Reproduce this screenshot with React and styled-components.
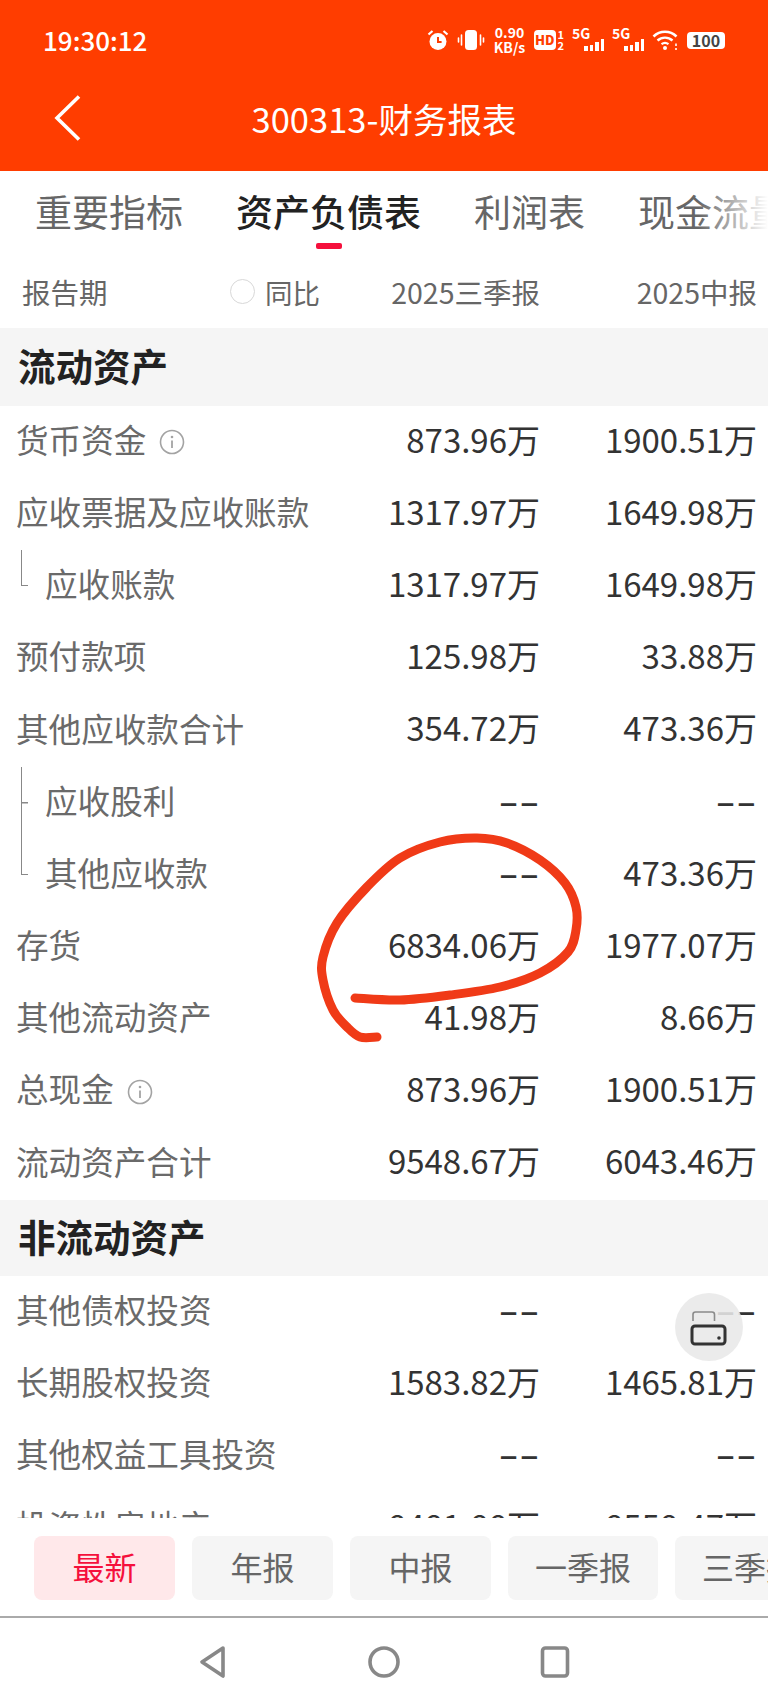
import React from "react";
import styled, { createGlobalStyle } from "styled-components";

const FONT = '"Noto Sans CJK SC", "Noto Sans", sans-serif';

const GlobalStyle = createGlobalStyle`
  html, body {
    margin: 0;
    padding: 0;
    background: #fff;
  }
  * {
    box-sizing: border-box;
  }
`;

const currentRows = [
  { label: "货币资金", a: "873.96万", b: "1900.51万", info: true },
  { label: "应收票据及应收账款", a: "1317.97万", b: "1649.98万" },
  { label: "应收账款", a: "1317.97万", b: "1649.98万", tree: "last" },
  { label: "预付款项", a: "125.98万", b: "33.88万" },
  { label: "其他应收款合计", a: "354.72万", b: "473.36万" },
  { label: "应收股利", a: "--", b: "--", tree: "mid" },
  { label: "其他应收款", a: "--", b: "473.36万", tree: "last" },
  { label: "存货", a: "6834.06万", b: "1977.07万" },
  { label: "其他流动资产", a: "41.98万", b: "8.66万" },
  { label: "总现金", a: "873.96万", b: "1900.51万", info: true },
  { label: "流动资产合计", a: "9548.67万", b: "6043.46万" },
];

const nonCurrentRows = [
  { label: "其他债权投资", a: "--", b: "--" },
  { label: "长期股权投资", a: "1583.82万", b: "1465.81万" },
  { label: "其他权益工具投资", a: "--", b: "--" },
  { label: "投资性房地产", a: "8481.88万", b: "8558.47万" },
];

const tabs = ["重要指标", "资产负债表", "利润表", "现金流量表"];
const periods = ["最新", "年报", "中报", "一季报", "三季报"];

// hand stroke on top of the table, smoothed with catmull-rom
const inkPoints = [
  [355, 998], [400, 1000], [450, 995], [500, 987], [540, 973], [568, 952],
  [576, 930], [576, 907], [565, 883], [540, 860], [507, 843], [477, 838],
  [440, 842], [400, 858], [367, 887], [337, 923], [323, 957], [323, 980],
  [333, 1010], [347, 1027], [360, 1037], [377, 1037],
];

const smoothPath = (pts) => {
  let d = `M${pts[0][0]} ${pts[0][1]}`;
  for (let i = 0; i < pts.length - 1; i++) {
    const p0 = pts[i - 1] || pts[i];
    const p1 = pts[i];
    const p2 = pts[i + 1];
    const p3 = pts[i + 2] || p2;
    const c1x = p1[0] + (p2[0] - p0[0]) / 6;
    const c1y = p1[1] + (p2[1] - p0[1]) / 6;
    const c2x = p2[0] - (p3[0] - p1[0]) / 6;
    const c2y = p2[1] - (p3[1] - p1[1]) / 6;
    d += ` C${c1x} ${c1y} ${c2x} ${c2y} ${p2[0]} ${p2[1]}`;
  }
  return d;
};

const Value = ({ text }) =>
  text === "--" ? (
    <Cell>
      <Dash>--</Dash>
    </Cell>
  ) : (
    <Cell>{text}</Cell>
  );

const InfoIcon = () => (
  <svg width="26" height="26" viewBox="0 0 26 26" fill="none">
    <circle cx="13" cy="13" r="11.5" stroke="#a3a3a3" strokeWidth="1.6" />
    <circle cx="13" cy="8" r="1.3" fill="#a3a3a3" />
    <path d="M13 11.5V19" stroke="#a3a3a3" strokeWidth="1.8" />
  </svg>
);

const TableRow = ({ row }) => (
  <Row>
    <LabelWrap>
      {row.tree && <TreeMark $kind={row.tree} />}
      <Label>{row.label}</Label>
      {row.info && <InfoIcon />}
    </LabelWrap>
    <Value text={row.a} />
    <Value text={row.b} />
  </Row>
);

const SignalIcon = () => (
  <Signal>
    <SignalText>5G</SignalText>
    <Bars>
      <Bar $h={5} />
      <Bar $h={6} />
      <Bar $h={9} />
      <Bar $h={12} />
    </Bars>
  </Signal>
);

const StatusIcons = () => (
  <StatusRight>
    <svg width="22" height="22" viewBox="0 0 22 22">
      <circle cx="11" cy="12.5" r="8.5" fill="#fff" />
      <path d="M11 8v5h3.6" stroke="#ff3d00" strokeWidth="2" fill="none" />
      <path d="M1.5 5.5L5.5 2M20.5 5.5L16.5 2" stroke="#fff" strokeWidth="2.2" />
    </svg>
    <svg width="28" height="22" viewBox="0 0 28 22">
      <rect x="8" y="1" width="12" height="20" rx="3.5" fill="#fff" />
      <path d="M4.5 6v10M1.5 9v4M23.5 6v10M26.5 9v4" stroke="#fff" strokeWidth="1.6" strokeLinecap="round" />
    </svg>
    <Speed>
      <span>0.90</span>
      <span>KB/s</span>
    </Speed>
    <HdWrap>
      <HdBox>HD</HdBox>
      <HdSims>
        <span>1</span>
        <span>2</span>
      </HdSims>
    </HdWrap>
    <SignalIcon />
    <SignalIcon />
    <svg width="27" height="22" viewBox="0 0 27 22" fill="none">
      <path d="M1.5 7.5C8 1.2 18 1.2 24.5 7.5" stroke="#fff" strokeWidth="2.6" />
      <path d="M5.5 11.5C9.8 7.6 16.2 7.6 20.5 11.5" stroke="#fff" strokeWidth="2.4" />
      <path d="M9.5 15.2C11.6 13.6 14.4 13.6 16.5 15.2" stroke="#fff" strokeWidth="2.2" />
      <circle cx="13" cy="19" r="2" fill="#fff" />
      <path d="M24 14.5v2.500M24 19v2" stroke="#fff" strokeWidth="1.6" />
    </svg>
    <Battery>100</Battery>
  </StatusRight>
);

const App = () => {
  return (
    <Page>
      <GlobalStyle />
      <Header>
        <StatusBar>
          <Time>19:30:12</Time>
          <StatusIcons />
        </StatusBar>
        <TitleBar>
          <BackButton>
            <svg width="30" height="48" viewBox="0 0 30 48" fill="none">
              <path d="M26 2.5L4 24l22 21.5" stroke="#fff" strokeWidth="3.6" />
            </svg>
          </BackButton>
          <Title>300313-财务报表</Title>
        </TitleBar>
      </Header>

      <Tabs>
        {tabs.map((t, i) => (
          <Tab key={t} $active={i === 1}>
            <TabText>{t}</TabText>
          </Tab>
        ))}
        <TabFade />
      </Tabs>

      <ColumnHead>
        <HeadLeft>
          <span>报告期</span>
          <Compare>
            <Radio />
            同比
          </Compare>
        </HeadLeft>
        <HeadCell>2025三季报</HeadCell>
        <HeadCell>2025中报</HeadCell>
      </ColumnHead>

      <Body>
        <Section $h={78}>流动资产</Section>
        {currentRows.map((r) => (
          <TableRow key={r.label} row={r} />
        ))}
        <Section $h={76}>非流动资产</Section>
        {nonCurrentRows.map((r) => (
          <TableRow key={r.label} row={r} />
        ))}
      </Body>

      <PeriodBar>
        {periods.map((p, i) => (
          <Period key={p} $active={i === 0}>
            {p}
          </Period>
        ))}
      </PeriodBar>

      <NavBar>
        <svg width="30" height="34" viewBox="0 0 30 34" fill="none">
          <path d="M25 3L4 17l21 14z" stroke="#888" strokeWidth="3.6" strokeLinejoin="round" />
        </svg>
        <svg width="34" height="34" viewBox="0 0 34 34" fill="none">
          <circle cx="17" cy="17" r="14" stroke="#888" strokeWidth="3.6" />
        </svg>
        <svg width="30" height="34" viewBox="0 0 30 34" fill="none">
          <rect x="2.5" y="3" width="25" height="28" rx="3" stroke="#888" strokeWidth="3.6" />
        </svg>
      </NavBar>

      <FloatButton>
        <svg width="40" height="40" viewBox="0 0 40 40" fill="none">
          <path d="M4 14V7.500Q4 5 6.500 5H23Q25.500 5 25.500 7.500V14" stroke="#8a8a8a" strokeWidth="1.6" />
          <rect x="3" y="19" width="33" height="18" rx="3" stroke="#333" strokeWidth="3" />
          <circle cx="30" cy="31" r="1.8" fill="#333" />
        </svg>
      </FloatButton>

      <Ink width="768" height="1707" viewBox="0 0 768 1707" fill="none">
        <path d={smoothPath(inkPoints)} stroke="#f03a17" strokeWidth="9" strokeLinecap="round" strokeLinejoin="round" />
      </Ink>
    </Page>
  );
};
export default App;

const Page = styled.div`
  position: relative;
  width: 768px;
  height: 1707px;
  display: flex;
  flex-direction: column;
  overflow: hidden;
  background: #fff;
  font-family: ${FONT};
`;
const Header = styled.div`
  height: 171px;
  flex-shrink: 0;
  background: #ff3d00;
  color: #fff;
`;
const StatusBar = styled.div`
  height: 80px;
  padding: 0 43px;
  display: flex;
  align-items: center;
  justify-content: space-between;
`;
const Time = styled.div`
  font-size: 26px;
  font-weight: 500;
  line-height: 1;
`;
const StatusRight = styled.div`
  display: flex;
  align-items: center;
  gap: 8px;
`;
const Speed = styled.div`
  width: 33px;
  display: flex;
  flex-direction: column;
  align-items: center;
  font-size: 14px;
  font-weight: 700;
  line-height: 15px;
  white-space: nowrap;
`;
const HdWrap = styled.div`
  width: 30px;
  display: flex;
  align-items: center;
  gap: 2px;
`;
const HdBox = styled.div`
  width: 22px;
  height: 20px;
  border-radius: 4px;
  background: #fff;
  color: #ff3d00;
  font-size: 13px;
  font-weight: 900;
  line-height: 20px;
  text-align: center;
`;
const HdSims = styled.div`
  display: flex;
  flex-direction: column;
  font-size: 11px;
  font-weight: 700;
  line-height: 11px;
`;
const Signal = styled.div`
  position: relative;
  width: 32px;
  height: 26px;
  display: flex;
  align-items: flex-end;
  justify-content: flex-end;
`;
const SignalText = styled.div`
  position: absolute;
  top: -1px;
  left: 0;
  font-size: 14px;
  font-weight: 700;
  line-height: 15px;
`;
const Bars = styled.div`
  display: flex;
  align-items: flex-end;
  gap: 2px;
  padding-bottom: 2px;
`;
const Bar = styled.div`
  width: 3.5px;
  height: ${(p) => p.$h}px;
  background: #fff;
`;
const Battery = styled.div`
  width: 38px;
  height: 17px;
  border-radius: 4px;
  background: #fff;
  color: #444;
  font-size: 16px;
  font-weight: 700;
  line-height: 17px;
  text-align: center;
`;
const TitleBar = styled.div`
  position: relative;
  height: 91px;
  display: flex;
  align-items: center;
  justify-content: center;
`;
const BackButton = styled.div`
  position: absolute;
  left: 53px;
  top: 14px;
  line-height: 0;
`;
const Title = styled.div`
  font-size: 34.5px;
  line-height: 1;
  margin-top: -14px;
  color: #fff;
`;
const Tabs = styled.div`
  position: relative;
  height: 84px;
  flex-shrink: 0;
  padding-left: 35px;
  display: flex;
  align-items: center;
  gap: 53px;
  overflow: hidden;
`;
const Tab = styled.div`
  position: relative;
  flex-shrink: 0;
  height: 84px;
  font-size: 37px;
  white-space: nowrap;
  color: ${(p) => (p.$active ? "#222" : "#666")};
  font-weight: ${(p) => (p.$active ? 500 : 400)};
  &::after {
    content: "";
    display: ${(p) => (p.$active ? "block" : "none")};
    position: absolute;
    left: 50%;
    bottom: 6px;
    width: 26px;
    height: 6px;
    margin-left: -13px;
    border-radius: 2px;
    background: #f5103c;
  }
`;
const TabText = styled.div`
  line-height: 80px;
`;
const TabFade = styled.div`
  position: absolute;
  right: 0;
  top: 0;
  bottom: 0;
  width: 70px;
  background: linear-gradient(to right, rgba(255, 255, 255, 0), #fff 100%);
`;
const ColumnHead = styled.div`
  height: 73px;
  flex-shrink: 0;
  padding: 0 11px 0 22px;
  display: grid;
  grid-template-columns: 1fr 200px 217px;
  align-items: center;
  font-size: 28.5px;
  color: #666;
`;
const HeadLeft = styled.div`
  display: flex;
  align-items: center;
  justify-content: space-between;
  padding-right: 20px;
`;
const Compare = styled.div`
  display: flex;
  align-items: center;
  gap: 10px;
  font-size: 27.5px;
`;
const Radio = styled.div`
  width: 25px;
  height: 25px;
  border-radius: 50%;
  border: 1.5px solid #d8d8d8;
`;
const HeadCell = styled.div`
  text-align: right;
  white-space: nowrap;
`;
const Body = styled.div`
  flex: 1;
  min-height: 0;
  overflow: hidden;
`;
const Section = styled.div`
  height: ${(p) => p.$h}px;
  padding: 0 0 5px 18px;
  display: flex;
  align-items: center;
  background: #f5f5f5;
  color: #222;
  font-size: 37.5px;
  font-weight: 700;
`;
const Row = styled.div`
  height: 72.2px;
  padding: 0 11px 0 16px;
  display: grid;
  grid-template-columns: 1fr 200px 217px;
  align-items: center;
`;
const LabelWrap = styled.div`
  height: 100%;
  display: flex;
  align-items: center;
  gap: 13px;
`;
const Label = styled.div`
  padding-bottom: 6px;
  font-size: 32.6px;
  line-height: 1;
  color: #6a6a6a;
  white-space: nowrap;
`;
const TreeMark = styled.div`
  align-self: flex-start;
  flex-shrink: 0;
  width: 7px;
  margin: 0 4px 0 5px;
  height: ${(p) => (p.$kind === "last" ? "50%" : "100%")};
  border-left: 1.5px solid #888;
  border-bottom: ${(p) => (p.$kind === "last" ? "1.5px solid #888" : "none")};
  background: ${(p) =>
    p.$kind === "mid"
      ? "linear-gradient(#888, #888) left center / 100% 1.5px no-repeat"
      : "none"};
`;
const Cell = styled.div`
  padding-bottom: 6px;
  font-size: 33px;
  line-height: 1;
  color: #333;
  text-align: right;
  white-space: nowrap;
`;
const Dash = styled.span`
  display: inline-block;
  font-weight: 500;
  transform: scaleX(1.75);
  transform-origin: right center;
`;
const PeriodBar = styled.div`
  height: 98px;
  flex-shrink: 0;
  padding: 18px 0 0 34px;
  display: flex;
  align-items: flex-start;
  gap: 17px;
  overflow: hidden;
  background: #fff;
`;
const Period = styled.div`
  flex-shrink: 0;
  min-width: 141px;
  height: 64px;
  padding: 0 27px 4px;
  display: flex;
  align-items: center;
  justify-content: center;
  border-radius: 8px;
  font-size: 32px;
  white-space: nowrap;
  background: ${(p) => (p.$active ? "#ffe8ea" : "#f5f5f5")};
  color: ${(p) => (p.$active ? "#f5103c" : "#666")};
`;
const NavBar = styled.div`
  height: 91px;
  flex-shrink: 0;
  border-top: 2px solid #aaa;
  display: flex;
  align-items: center;
  justify-content: center;
  gap: 139px;
  padding-bottom: 2px;
`;
const FloatButton = styled.div`
  position: absolute;
  left: 675px;
  top: 1293px;
  width: 68px;
  height: 68px;
  border-radius: 50%;
  display: flex;
  align-items: center;
  justify-content: center;
  background: rgba(232, 232, 232, 0.88);
`;
const Ink = styled.svg`
  position: absolute;
  left: 0;
  top: 0;
  pointer-events: none;
`;
